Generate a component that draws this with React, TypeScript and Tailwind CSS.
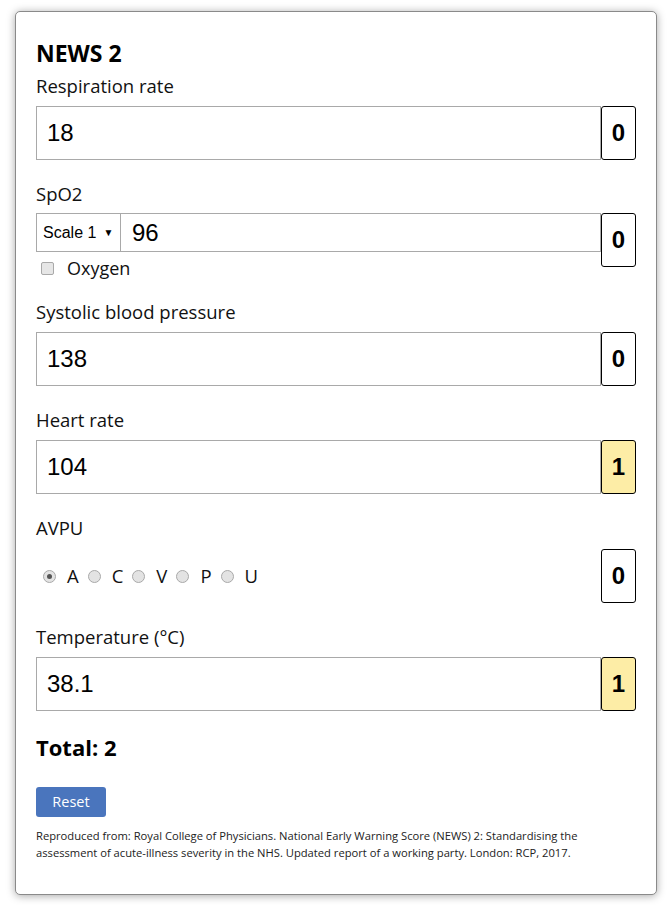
import React from 'react';

type RowProps = {
    label: string;
    value: string;
    score: number;
};

const ScoreBox: React.FC<{ score: number }> = ({ score }) => (
    <div
        className={`w-[35px] h-[54px] shrink-0 flex items-center justify-center border border-black rounded-[3px] font-['Liberation_Sans',Arial,sans-serif] font-bold text-[24px] text-black ${
            score > 0 ? 'bg-[#fdeda6]' : 'bg-white'
        }`}
    >
        {score}
    </div>
);

const FieldRow: React.FC<RowProps> = ({ label, value, score }) => (
    <div className="mb-[21px]">
        <label className="block text-[18.5px] leading-[26px] mb-[7px] text-[#111]">{label}</label>
        <div className="flex items-stretch">
            <input
                type="text"
                defaultValue={value}
                className="flex-1 min-w-0 h-[54px] border border-[#a9a9a9] px-[10px] font-['Liberation_Sans',Arial,sans-serif] text-[24px] text-black outline-none"
            />
            <ScoreBox score={score} />
        </div>
    </div>
);

const Radio: React.FC<{ checked?: boolean; letter: string }> = ({ checked, letter }) => (
    <span className="flex items-center">
        <span className="w-[13px] h-[13px] rounded-full border border-[#a9a9a9] bg-[#e3e3e3] flex items-center justify-center">
            {checked && <span className="w-[5px] h-[5px] rounded-full bg-[#555]" />}
        </span>
        <span className="ml-[11px] mr-[9px] text-[18.5px]">{letter}</span>
    </span>
);

export default function App() {
    return (
        <div className="bg-white min-h-[905px] pt-[11px] px-[15px] pb-[10px] font-['Open_Sans','Noto_Sans',sans-serif] text-[#111]">
            <div className="w-[642px] border border-[#8a8a8a] rounded-[5px] shadow-[0_1px_8px_rgba(0,0,0,0.35)] bg-white px-[20px] pt-[26px] pb-[33px]">
                <h1 className="text-[23px] font-bold leading-[30px] text-black mb-[5px]">NEWS 2</h1>

                <FieldRow label="Respiration rate" value="18" score={0} />

                <div className="mb-[21px]">
                    <label className="block text-[18.5px] leading-[26px] mb-[6px]">SpO2</label>
                    <div className="flex items-start">
                        <div className="flex-1 min-w-0">
                            <div className="flex h-[39px]">
                                <div className="w-[85px] shrink-0 border border-[#a9a9a9] flex items-center pl-[6px] font-['Liberation_Sans',Arial,sans-serif] text-[16px] text-black">
                                    Scale 1
                                    <span className="ml-[7px] text-[10px]">▼</span>
                                </div>
                                <input
                                    type="text"
                                    defaultValue="96"
                                    className="flex-1 min-w-0 border border-l-0 border-[#a9a9a9] px-[11px] font-['Liberation_Sans',Arial,sans-serif] text-[24px] text-black outline-none"
                                />
                            </div>
                            <div className="flex items-center mt-[6px] ml-[5px] h-[20px]">
                                <span className="w-[13px] h-[13px] rounded-[2px] border border-[#a9a9a9] bg-[#e6e6e6]" />
                                <span className="ml-[13px] text-[18px]">Oxygen</span>
                            </div>
                        </div>
                        <ScoreBox score={0} />
                    </div>
                </div>

                <FieldRow label="Systolic blood pressure" value="138" score={0} />
                <FieldRow label="Heart rate" value="104" score={1} />

                <div className="mb-[21px]">
                    <label className="block text-[18.5px] leading-[26px] mb-[8px]">AVPU</label>
                    <div className="flex items-center">
                        <div className="flex-1 flex items-center pl-[7px]">
                            <Radio checked letter="A" />
                            <Radio letter="C" />
                            <Radio letter="V" />
                            <Radio letter="P" />
                            <Radio letter="U" />
                        </div>
                        <ScoreBox score={0} />
                    </div>
                </div>

                <FieldRow label="Temperature (°C)" value="38.1" score={1} />

                <div className="text-[22px] font-bold leading-[30px] text-black mt-[5px] mb-[25px]">Total: 2</div>

                <button className="h-[30px] w-[70px] bg-[#4a75bd] text-white text-[14.5px] rounded-[3px]">Reset</button>

                <p className="mt-[10px] text-[11.2px] leading-[17px] text-[#222]">
                    Reproduced from: Royal College of Physicians. National Early Warning Score (NEWS) 2: Standardising the assessment of acute-illness severity in the NHS. Updated report of a working party. London: RCP, 2017.
                </p>
            </div>
        </div>
    );
}
